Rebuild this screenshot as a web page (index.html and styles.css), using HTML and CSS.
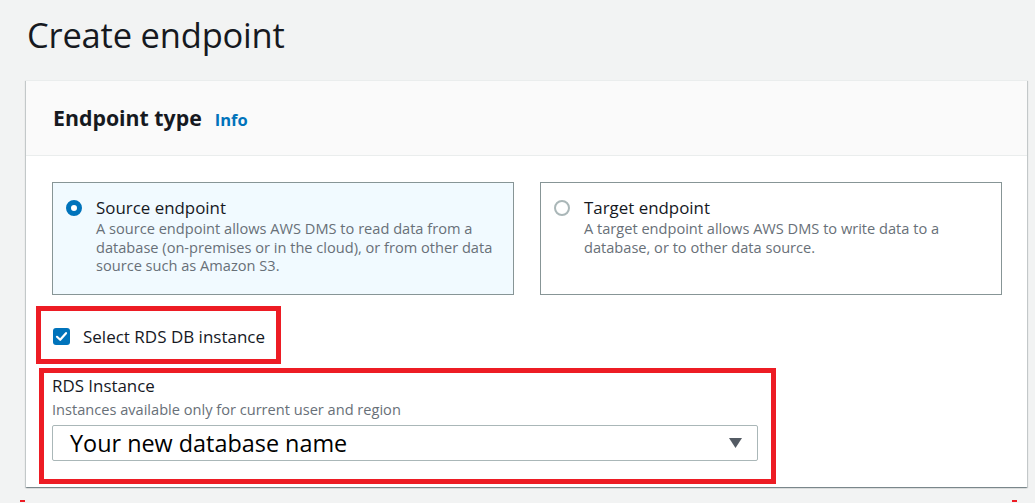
FILE: index.html
```html
<!DOCTYPE html>
<html lang="en">
<head>
<meta charset="utf-8">
<title>Create endpoint</title>
<link rel="stylesheet" href="styles.css">
</head>
<body>
<main class="page">
  <h1 class="page-title">Create endpoint</h1>
  <section class="card">
    <header class="card-header">
      <h2 class="card-title">Endpoint type</h2>
      <a class="info-link" href="#">Info</a>
    </header>
    <div class="card-body">
      <div class="tiles">
        <label class="tile tile-selected">
          <span class="radio radio-on"></span>
          <span class="tile-text">
            <span class="tile-title">Source endpoint</span>
            <span class="tile-desc">A source endpoint allows AWS DMS to read data from a database (on-premises or in the cloud), or from other data source such as Amazon S3.</span>
          </span>
        </label>
        <label class="tile">
          <span class="radio"></span>
          <span class="tile-text">
            <span class="tile-title">Target endpoint</span>
            <span class="tile-desc">A target endpoint allows AWS DMS to write data to a database, or to other data source.</span>
          </span>
        </label>
      </div>

      <label class="rds-check">
        <span class="checkbox">
          <svg width="17" height="17" viewBox="0 0 17 17"><path d="M4 8.8 L7.2 11.8 L13 5.2" fill="none" stroke="#fff" stroke-width="2.2" stroke-linecap="round" stroke-linejoin="round"/></svg>
        </span>
        <span class="check-label">Select RDS DB instance</span>
      </label>

      <div class="rds-field">
        <div class="field-label">RDS Instance</div>
        <div class="field-desc">Instances available only for current user and region</div>
        <div class="select">
          <span class="select-value">Your new database name</span>
          <svg class="caret" width="13" height="10" viewBox="0 0 13 10"><path d="M0 0 H13 L6.5 10 Z" fill="#545b64"/></svg>
        </div>
      </div>
    </div>
  </section>
  <div class="marks"><span class="mark"></span><span class="mark"></span></div>
</main>
</body>
</html>
```

FILE: styles.css
```css
html, body {
  margin: 0;
  padding: 0;
}

body {
  background: #f2f3f3;
  font-family: "Open Sans", "Liberation Sans", sans-serif;
  color: #16191f;
  width: 1035px;
  height: 503px;
  overflow: hidden;
}

.page {
  padding: 0 8px 0 26px;
}

.page-title {
  margin: 0;
  padding: 15px 0 0 1px;
  font-size: 34.5px;
  font-weight: 400;
  line-height: 40px;
  color: #16191f;
  letter-spacing: -0.2px;
}

.card {
  margin-top: 25px;
  background: #fff;
  box-shadow: 0 1px 1px 0 rgba(0, 28, 36, 0.3), 1px 1px 1px 0 rgba(0, 28, 36, 0.15), -1px 1px 1px 0 rgba(0, 28, 36, 0.15);
  border-top: 1px solid #eaeded;
}

.card-header {
  display: flex;
  align-items: baseline;
  gap: 13px;
  height: 75px;
  box-sizing: border-box;
  padding: 23px 26px 0 27px;
  background: #fafafa;
  border-bottom: 1px solid #eaeded;
}

.card-title {
  margin: 0;
  font-size: 21.3px;
  font-weight: 700;
  line-height: 28px;
  color: #16191f;
}

.info-link {
  font-size: 16.5px;
  font-weight: 700;
  color: #0073bb;
  text-decoration: none;
}

.card-body {
  padding: 26px 25px 8px 26px;
}

.tiles {
  display: grid;
  grid-template-columns: 462px 462px;
  gap: 26px;
}

.tile {
  display: flex;
  align-items: flex-start;
  gap: 14px;
  border: 1px solid #879596;
  padding: 14px 14px 19px 13px;
  background: #fff;
}

.tile-selected {
  background: #f1faff;
}

.radio {
  flex: none;
  width: 16px;
  height: 16px;
  margin-top: 3px;
  box-sizing: border-box;
  border-radius: 50%;
  border: 2px solid #aab7b8;
  background: #fff;
}

.radio-on {
  border: 5px solid #0073bb;
  background: #fff;
}

.tile-text {
  display: flex;
  flex-direction: column;
}

.tile-title {
  font-size: 16.9px;
  line-height: 22px;
  color: #16191f;
}

.tile-desc {
  font-size: 14.6px;
  line-height: 18.5px;
  color: #687078;
}

.rds-check {
  display: flex;
  width: max-content;
  align-items: center;
  gap: 13px;
  margin: 16px 0 0 -11px;
  padding: 15px 11px 11px 12px;
  outline: 5px solid #ed1c24;
}

.checkbox {
  display: block;
  width: 17px;
  height: 17px;
  border-radius: 3px;
  background: #0073bb;
}

.checkbox svg {
  display: block;
}

.check-label {
  font-size: 17px;
  line-height: 22px;
  color: #16191f;
}

.rds-field {
  width: 727px;
  box-sizing: border-box;
  margin: 14px 0 0 -8px;
  padding: 2px 13px 18px 8px;
  outline: 5px solid #ed1c24;
}

.field-label {
  font-size: 16.9px;
  line-height: 22px;
  color: #16191f;
}

.field-desc {
  margin-top: 3px;
  font-size: 14.6px;
  line-height: 18px;
  color: #687078;
}

.select {
  display: flex;
  align-items: center;
  justify-content: space-between;
  margin-top: 7px;
  height: 36px;
  box-sizing: border-box;
  border: 1px solid #aab7b8;
  border-radius: 2px;
  padding: 0 15px 0 17px;
  background: #fff;
}

.select-value {
  font-size: 23.4px;
  line-height: 34px;
  color: #000;
}

.caret {
  display: block;
}

.marks {
  display: flex;
  justify-content: space-between;
  margin: 13px 10px 0 -6px;
}

.mark {
  display: block;
  width: 5px;
  height: 2px;
  background: #ed1c24;
}
```
